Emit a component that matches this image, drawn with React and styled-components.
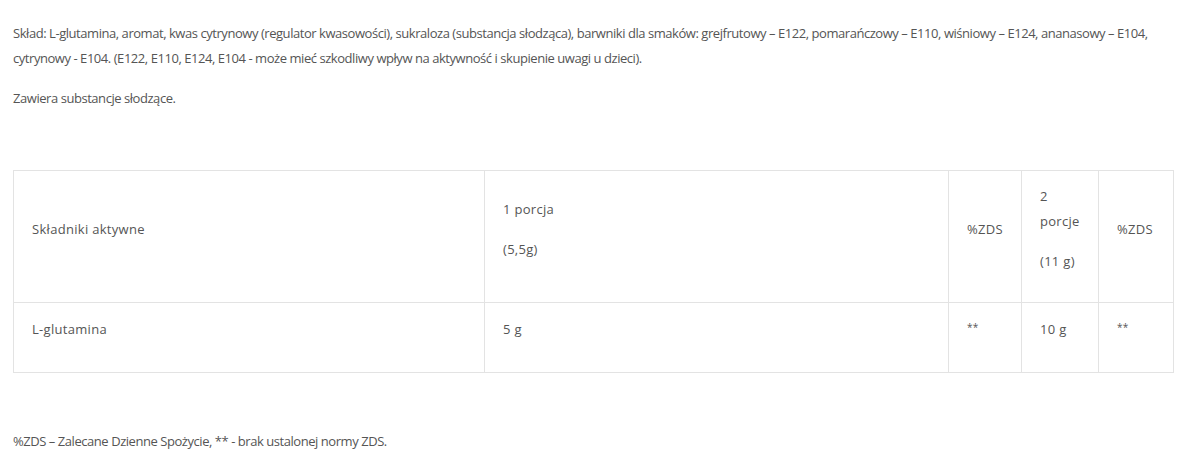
import { createGlobalStyle, styled } from "styled-components";

const GlobalStyle = createGlobalStyle`
  body {
    margin: 0;
    background: #ffffff;
  }
`;

const Page = styled.div`
  padding: 21px 21px 0 13px;
  font-family: "Open Sans", "Liberation Sans", sans-serif;
  font-size: 13px;
  font-weight: 400;
  line-height: 25px;
  color: #555555;
`;

const Text = styled.p`
  margin: 0 0 15px;
  letter-spacing: -0.45px;
`;

const Table = styled.table`
  width: 1160px;
  margin: 59px 0 56px;
  border-collapse: collapse;
  table-layout: fixed;
  letter-spacing: 0.3px;
`;

const Cell = styled.td`
  border: 1px solid #e3e3e3;
  padding: ${(p) => (p.$top ? "14px 18px 15px" : "13px 18px")};
  vertical-align: ${(p) => (p.$top ? "top" : "middle")};
  word-wrap: break-word;

  p {
    margin: 0 0 15px;
  }
`;

const Stars = styled.p`
  font-size: 10px;
  line-height: 20px;
`;

export default function App() {
  return (
    <Page>
      <GlobalStyle />
      <Text>
        Skład: L-glutamina, aromat, kwas cytrynowy (regulator kwasowości),
        sukraloza (substancja słodząca), barwniki dla smaków: grejfrutowy – E122,
        pomarańczowy – E110, wiśniowy – E124, ananasowy – E104, cytrynowy -
        E104. (E122, E110, E124, E104 - może mieć szkodliwy wpływ na aktywność i
        skupienie uwagi u dzieci).
      </Text>
      <Text>Zawiera substancje słodzące.</Text>

      <Table>
        <colgroup>
          <col style={{ width: 471 }} />
          <col style={{ width: 464 }} />
          <col style={{ width: 73 }} />
          <col style={{ width: 77 }} />
          <col style={{ width: 75 }} />
        </colgroup>
        <tbody>
          <tr>
            <Cell>
              <p>Składniki aktywne</p>
            </Cell>
            <Cell>
              <p>1 porcja</p>
              <p>(5,5g)</p>
            </Cell>
            <Cell>
              <p>%ZDS</p>
            </Cell>
            <Cell>
              <p>2 porcje</p>
              <p>(11 g)</p>
            </Cell>
            <Cell>
              <p>%ZDS</p>
            </Cell>
          </tr>
          <tr>
            <Cell $top>
              <p>L-glutamina</p>
            </Cell>
            <Cell $top>
              <p>5 g</p>
            </Cell>
            <Cell $top>
              <Stars>**</Stars>
            </Cell>
            <Cell $top>
              <p>10 g</p>
            </Cell>
            <Cell $top>
              <Stars>**</Stars>
            </Cell>
          </tr>
        </tbody>
      </Table>

      <Text>%ZDS – Zalecane Dzienne Spożycie, ** - brak ustalonej normy ZDS.</Text>
    </Page>
  );
}
